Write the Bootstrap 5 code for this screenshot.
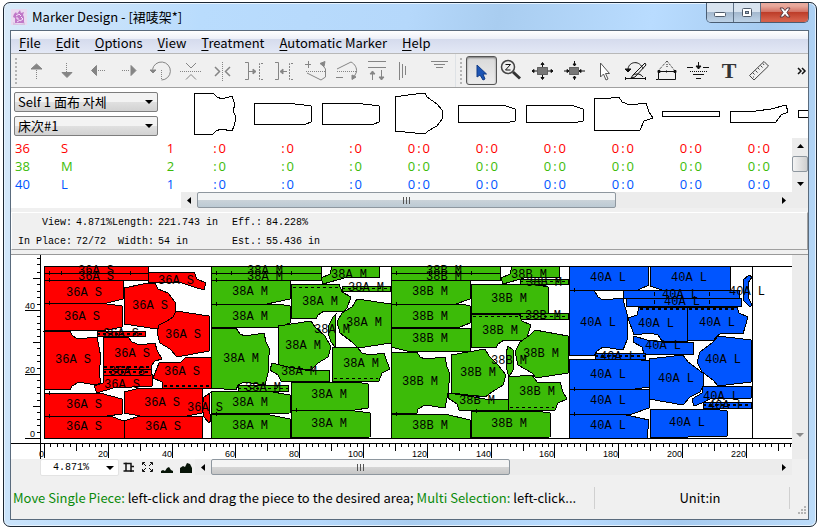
<!DOCTYPE html>
<html lang="en">
<head>
<meta charset="utf-8">
<meta name="viewport" content="width=device-width, initial-scale=1">
<title>Marker Design</title>
<link href="https://cdn.jsdelivr.net/npm/bootstrap@5.3.0/dist/css/bootstrap.min.css" rel="stylesheet">
<style>
  :root { --face: #f0f0f0; --line: #a0a0a0; --red: #f00; --green: #3cbb08; --blue: #0055ff; --ui: "Noto Sans CJK SC", "Noto Sans CJK KR", sans-serif; }
  body { font-family: "Open Sans", "Noto Sans CJK SC", "Noto Sans CJK KR", sans-serif; font-size: 12px; line-height: 16px; color: #000; background: #fff; }
  .frame { margin: 2px 1px 4px 3px; padding: 0 7px 6px 6px; border: 1px solid #1c2733; border-radius: 7px;
    background: linear-gradient(100deg, #d9eaf9 0, #b9dcfd 22%, #b5d8fb 45%, #a9cdf0 55%, #b9dcff 72%, #a6cbf0 85%, #bcdcfa 100%); box-shadow: inset 0 0 0 1px #e6f3ff; }
  .titlebar { height: 27px; font: 13px/20px var(--ui); }
  .titlebar svg { margin: 1px 5px 0 1px; }
  .caption-btns { height: 20px; border: 1px solid #4a5d73; border-top: 0; border-radius: 0 0 5px 5px; overflow: hidden; }
  .caption-btns svg { margin: 0; }
  .caption-btns button { width: 27px; border: 0; border-right: 1px solid #5d7086; background: linear-gradient(#d8e3ef 0 45%, #a2b6cc 45%, #bed3e8); display: flex; align-items: center; justify-content: center; }
  .caption-btns .close-btn { width: 47px; border-right: 0; background: linear-gradient(#e8a99c 0 15%, #d37567 45%, #bb3a26 46%, #d4604a 90%); }
  .client { border: 1px solid #5a6b7d; background: var(--face); }
  .menubar { height: 23px; padding: 2px 0 0 8px; background: linear-gradient(#fff 0, #edf0f8 35%, #d5dbed 36%, #e3e8f5 100%); font: 13px/20px var(--ui); border-bottom: 1px solid #b8b8b8; }
  .menubar a { color: #000; text-decoration: none; margin-right: 15px; }
  .menubar u { text-underline-offset: 2px; }
  .toolbar { height: 34px; border-bottom: 1px solid var(--line); }
  .toolbar button { width: 31px; height: 32px; padding: 0; border: 0; background: none; flex: none; color: #111; display: block; }
  .toolbar .off button { color: #858585; }
  .toolbar .pressed { height: 29px; margin-top: 2px; border: 1px solid #555; border-radius: 3px; background: linear-gradient(#d9d9d9, #ececec); box-shadow: inset 0 1px 2px #777; overflow: hidden; }
  .toolbar .pressed svg { margin: -2px 0 0 -1px; }
  .grip { width: 2px; height: 26px; margin: 4px 4px; background: repeating-linear-gradient(#b4b4b4 0 2px, transparent 2px 4px); flex: none; }
  svg { display: block; flex: none; }
  .ico { fill: none; stroke: currentColor; stroke-width: 1; }
  .toolbar .ico { margin-top: 1px; }
  .dot { stroke-dasharray: 1 1; }
  .solid { fill: currentColor; }
  .sheet { background: #fff; }
  .side { width: 170px; flex: none; }
  .side.picks { padding: 4px 0 0 3px; gap: 4px; }
  .combo { display: block; width: 144px; height: 20px; padding: 0 3px; font: 13px/18px var(--ui); color: #000; border: 1px solid #7d7d7d; border-radius: 2px; appearance: none;
    background: url("data:image/svg+xml,%3Csvg xmlns='http://www.w3.org/2000/svg' width='8' height='4'%3E%3Cpath d='M0 0h8L4 4z'/%3E%3C/svg%3E") no-repeat right 4px center, linear-gradient(#f3f3f3 0 50%, #e0e0e0 50%, #d2d2d2); }
  .combo.plain { width: 79px; height: 17px; border-color: #e3e3e3; padding-left: 12px; font: 10px/15px "Liberation Mono", monospace; background-color: #fff; background-image: url("data:image/svg+xml,%3Csvg xmlns='http://www.w3.org/2000/svg' width='8' height='4'%3E%3Cpath d='M0 0h8L4 4z'/%3E%3C/svg%3E"); }
  .sizes { table-layout: fixed; width: 100%; font-size: 13px; line-height: 16px; }
  .sizes td { padding: 2px 0 0; white-space: nowrap; overflow: hidden; }
  .sizes td.qty { padding-right: 23px; }
  .qty span { display: flex; justify-content: flex-end; gap: 2px; }
  .sbar { background: #ececec; display: flex; }
  .sbar.h { height: 16px; }
  .sbar.v { width: 16px; flex-direction: column; flex: none; }
  .sbar button { border: 0; padding: 0; background: none; width: 16px; height: 16px; display: flex; align-items: center; justify-content: center; flex: none; color: #444; }
  .thumb { border: 1px solid #8e979f; border-radius: 2px; background: linear-gradient(#f2f4f5 0 48%, #cbd3d9 49%, #bccad4); display: flex; align-items: center; justify-content: center; }
  .thumb.gray { background: linear-gradient(#f4f4f4 0 48%, #d6d6d6 49%, #c6c6c6); }
  .thumb.side-lit { background: linear-gradient(90deg, #f4f4f4, #cfcfcf); height: 16px; margin-top: 2px; }
  .readout { height: 38px; margin-top: 4px; border: 1px solid #fff; border-width: 1px 0 0 1px; border-right: 1px solid var(--line); border-bottom: 1px solid var(--line);
    font: 10px/18px "Liberation Mono", monospace; }
  .readout dl { display: grid; grid-template-columns: 60px 40px 42px 70px 38px auto; justify-content: start; margin: 0; }
  .readout dt { font-weight: 400; text-align: right; white-space: nowrap; padding-top: 1px; }
  .readout dd { margin: 0; padding: 1px 0 0 4px; white-space: nowrap; }
  .desk { margin-top: 4px; border-top: 1px solid #999; }
  .canvas-svg { width: 100%; height: 204px; flex: 1 1 0; min-width: 0; overflow: hidden; }
  .strip-svg { flex: 1 1 0; min-width: 0; height: 50px; }
  .canvas-svg .tag { font: 12px "Liberation Mono", monospace; text-anchor: middle; }
  .canvas-svg .num { font: 9px "Liberation Sans", sans-serif; text-anchor: end; }
  .canvas-svg path, .canvas-svg polygon { stroke: #000; shape-rendering: crispEdges; }
  .viewbar { height: 17px; }
  .viewbar .zoomer { margin-left: 29px; }
  .viewbar .mini { width: 19px; height: 17px; border: 0; padding: 0; background: none; }
  .status { height: 43px; font: 13px/20px var(--ui); padding: 0 1px 0 2px; }
  .status .cue { color: #0a8a0a; }
  .status .unit { width: 196px; border: 1px solid #d0d0d0; border-width: 0 1px; height: 22px; line-height: 22px; }
</style>
</head>
<body>
<div class="frame">
  <header class="titlebar d-flex align-items-start">
    <svg class="align-self-center" width="16" height="16" viewBox="0 0 16 16"><rect width="16" height="16" fill="#ead9f0"/><path d="M3 5l2-2 1 2 3-4 1 3 3-1-1 3 1 2v6H4V9L2 8z" fill="#c078c8"/><path d="M5 7l3-2 2 2M5 9h2v2M10 8l2 2-3 2M6 13l3-2" stroke="#f6e4fa" fill="none"/><path d="M2 13c4 3 8 3 12 0v3H2z" fill="#d9c3e2"/></svg>
    <span class="flex-grow-1 align-self-center">Marker Design - [裙唛架*]</span>
    <div class="caption-btns d-flex">
      <button type="button" aria-label="Minimize"><svg width="12" height="12"><rect x=".5" y="5.500" width="11" height="4" rx="1" fill="#fff" stroke="#4f5b6b"/></svg></button>
      <button type="button" aria-label="Maximize"><svg width="12" height="12"><rect x="1.500" y="1.500" width="9" height="8" rx="1" fill="#fff" stroke="#4f5b6b"/><rect x="4.500" y="4.500" width="3" height="2" fill="#9fb2c8" stroke="#4f5b6b"/></svg></button>
      <button type="button" class="close-btn" aria-label="Close"><svg width="12" height="11"><path d="M1 1h3l2 2.500L8 1h3L8 5.500 11 10H8L6 7.500 4 10H1l3-4.500z" fill="#fff" stroke="#5a3a42"/></svg></button>
    </div>
  </header>
  <main class="client">
    <nav class="menubar d-flex align-items-center">
      <a href="#"><u>F</u>ile</a><a href="#"><u>E</u>dit</a><a href="#"><u>O</u>ptions</a><a href="#"><u>V</u>iew</a><a href="#"><u>T</u>reatment</a><a href="#"><u>A</u>utomatic Marker</a><a href="#"><u>H</u>elp</a>
    </nav>
    <div class="toolbar d-flex">
      <div class="d-flex off border-end">
        <div class="grip"></div>
        <button type="button" aria-label="Up"><svg class="ico" width="31" height="32"><path class="solid" d="M10 14l5.500-5 5.500 5z"/><path class="dot" d="M15.500 15v9"/></svg></button>
        <button type="button" aria-label="Down"><svg class="ico" width="31" height="32"><path class="solid" d="M10 17.500h10l-5 5z"/><path class="dot" d="M14.500 8v9"/></svg></button>
        <button type="button" aria-label="Left"><svg class="ico" width="31" height="32"><path class="solid" d="M8.500 15.500l5-5v10z"/><path class="dot" d="M15 15.500h8"/></svg></button>
        <button type="button" aria-label="Right"><svg class="ico" width="31" height="32"><path class="solid" d="M22 15.500l-5-5v10z"/><path class="dot" d="M8 15.500h8"/></svg></button>
        <button type="button" aria-label="Rotate"><svg class="ico" width="31" height="32"><path d="M7.500 14.500A9 9 0 1 1 16.500 25"/><path class="solid" d="M5 15h6l-3 3z"/><path class="dot" d="M16.500 15v10"/></svg></button>
        <button type="button" aria-label="Flip vertical"><svg class="ico" width="31" height="32"><path class="dot" d="M4 16.500h22"/><path d="M10 8l5 5 5-5M10 24.500l5-5 5 5"/></svg></button>
        <button type="button" aria-label="Flip horizontal"><svg class="ico" width="31" height="32"><path class="dot" d="M15.500 7v19"/><path d="M8 12l4.500 4.500L8 21M23 12l-4.500 4.500L23 21" stroke-width="1.500"/></svg></button>
        <button type="button" aria-label="Match right"><svg class="ico" width="31" height="32"><path d="M7 7.500h3.500v17H7M11 16.500h6"/><path class="solid" d="M15 14l3 2.500-3 2.500z"/><path stroke-dasharray="2 1" d="M25 8.500h-3.500v16H25"/></svg></button>
        <button type="button" aria-label="Match left"><svg class="ico" width="31" height="32"><path d="M6 7.500h3.500v17H6M12 16.500h6"/><path class="solid" d="M14 14l-3 2.500 3 2.500z"/><path stroke-dasharray="2 1" d="M24 8.500h-3.500v16H24"/></svg></button>
        <button type="button" aria-label="Tilt up"><svg class="ico" width="31" height="32"><path d="M5 9.500h6M8.500 6v7M7 18l14 7 4.500-3V14l-3-4"/><path class="dot" d="M6 16.500h19"/><path class="solid" d="M20 8.500l5-2-1 5z"/></svg></button>
        <button type="button" aria-label="Tilt down"><svg class="ico" width="31" height="32"><path d="M6 14l14-7c4 2 6 6 5.500 10l-2 4M5 22.500h7"/><path class="dot" d="M6 16.500h19"/><path class="solid" d="M21 20l4 2-4 2.500z"/></svg></button>
        <button type="button" aria-label="Spread"><svg class="ico" width="31" height="32"><path d="M6 6.500h18M6 12.500h18M10.500 25v-7M19.500 15v7"/><path class="solid" d="M8 19l2.500-3 2.500 3zM17 22l2.500 3 2.500-3z"/></svg></button>
        <button type="button" aria-label="Align"><svg class="ico" width="31" height="32"><path d="M6.500 7v18M9.500 9v14M12.500 11v9"/></svg></button>
        <button type="button" aria-label="Filter"><svg class="ico" width="31" height="32"><path d="M7 6.500h17M10 9.500h11M12 12.500h7"/></svg></button>
      </div>
      <div class="d-flex flex-grow-1">
        <div class="grip"></div>
        <button type="button" class="pressed" aria-label="Select"><svg class="ico" width="31" height="32"><path d="M11 10v12l3-2 3 5 2-1-2-5h3.500z" fill="#1d55b5" stroke="#123c86"/></svg></button>
        <button type="button" aria-label="Zoom"><svg class="ico" width="31" height="32"><circle cx="11" cy="12" r="6.500" stroke="#444" stroke-width="1.500"/><path d="M8.500 9.500h5l-5 5.500h5"/><path d="M16 17l7 6.500" stroke-width="3" stroke="#333"/></svg></button>
        <button type="button" aria-label="Expand"><svg class="ico" width="31" height="32"><rect x="9.500" y="12.500" width="10" height="7" fill="#777" stroke-dasharray="1 1"/><path d="M14.500 8v4M14.500 20v4M4 16h5M20 16h5"/><path class="solid" d="M13 9.500l1.500-2 1.500 2zM13 22.500l1.500 2 1.500-2zM6 14.500L4 16l2 1.500zM23 14.500l2 1.500-2 1.500z"/></svg></button>
        <button type="button" aria-label="Shrink"><svg class="ico" width="31" height="32"><rect x="10.500" y="12.500" width="9" height="7" fill="#777" stroke-dasharray="1 1"/><path d="M15.500 6v5M15.500 21v4M5 16h5M20 16h6"/><path class="solid" d="M14 9h3l-1.500 2zM14 23h3l-1.500-2zM8 14.500v3l2-1.500zM22 14.500v3L20 16z"/></svg></button>
        <button type="button" aria-label="Pointer"><svg class="ico" width="31" height="32"><path d="M10.500 8v14l3-3 2.500 6 2-1-2.500-5.500h4z" fill="#fff" stroke="#555"/></svg></button>
        <button type="button" aria-label="Edit angle"><svg class="ico" width="31" height="32"><path d="M7 14c1-8 12-9 15 0M4 23.500h21M4.500 22v3M24.500 22v3"/><path class="solid" d="M4 14h6l-3 3z"/><path d="M24 8L12 20l-2 3 4-1L25 10zM12 20c4-2 8-1 10 2"/></svg></button>
        <button type="button" aria-label="Measure area"><svg class="ico" width="31" height="32"><path class="dot" d="M15 6L6 16M15 6l8 10M15 9v4"/><path d="M6.500 16.500h17v8h-17zM4 24.500h2"/><path class="solid" d="M6 15.500h2v2H6zM22 15.500h2v2h-2zM14 16h1v1h-1z"/></svg></button>
        <button type="button" aria-label="Drop"><svg class="ico" width="31" height="32"><path d="M4 12.500h6M20 12.500h6M15.500 7v7M10 19.500h11M13 23.500h5"/><path class="dot" d="M7 16.500h17"/><path class="solid" d="M13 11h5l-2.500 3z"/></svg></button>
        <button type="button" aria-label="Text"><svg class="ico" width="31" height="32"><text x="15" y="23" text-anchor="middle" font-family="Liberation Serif, serif" font-size="22" font-weight="700" fill="#333" stroke="none">T</text></svg></button>
        <button type="button" aria-label="Ruler"><svg class="ico" width="31" height="32"><path d="M4.500 20.500L19 6.500l4.500 4.500L9 25zM8 18l1.500 1.500M10.500 15.500l2 2M13 13l1.500 1.500M15.500 10.500l2 2M18 8.500l1 1.500M8 22h1" stroke="#444"/></svg></button>
        <button type="button" class="ms-auto" aria-label="More"><svg class="ico" width="31" height="32"><path d="M21 13l3 3-3 3M25 13l3 3-3 3" stroke-width="1.500"/></svg></button>
      </div>
    </div>

    <section class="sheet">
      <div class="d-flex overflow-hidden">
        <div class="side picks d-flex flex-column">
          <select class="combo" aria-label="Fabric"><option>Self 1 面布 자체</option></select>
          <select class="combo" aria-label="Bed"><option>床次#1</option></select>
        </div>
        <svg class="strip-svg" id="strip"></svg>
      </div>
      <div class="d-flex">
        <div class="flex-grow-1 overflow-hidden">
          <table class="sizes"><colgroup id="cols"></colgroup><tbody id="sizes"></tbody></table>
        </div>
        <div class="sbar v">
          <button type="button" aria-label="Scroll up"><svg width="7" height="4"><path d="M0 4h7L3.500 0z"/></svg></button>
          <div class="thumb side-lit"></div>
          <button type="button" class="mt-auto" aria-label="Scroll down"><svg width="7" height="4"><path d="M0 0h7L3.500 4z"/></svg></button>
        </div>
      </div>
      <div class="d-flex">
        <div class="side"></div>
        <div class="sbar h flex-grow-1">
          <button type="button" aria-label="Scroll left"><svg width="4" height="7"><path d="M4 0v7L0 3.500z"/></svg></button>
          <div class="thumb" style="width:68.500%"><svg width="9" height="7"><path d="M1.500 0v7M4.500 0v7M7.500 0v7" stroke="#555"/></svg></div>
          <button type="button" class="ms-auto" aria-label="Scroll right"><svg width="4" height="7"><path d="M0 0v7l4-3.500z"/></svg></button>
        </div>
        <div class="sbar v"></div>
      </div>
    </section>

    <section class="readout">
      <dl>
        <dt>View:</dt><dd>4.871%</dd><dt>Length:</dt><dd>221.743 in</dd><dt>Eff.:</dt><dd>84.228%</dd>
        <dt>In Place:</dt><dd>72/72</dd><dt>Width:</dt><dd>54 in</dd><dt>Est.:</dt><dd>55.436 in</dd>
      </dl>
    </section>

    <section class="desk">
      <div class="d-flex sheet">
        <svg class="canvas-svg" role="img" aria-label="Marker layout"><g transform="translate(33,11)" id="marker"></g></svg>
        <div class="sbar v"><button type="button" class="mt-auto mb-3" aria-label="Scroll down"><svg width="8" height="4" fill="#8a8a8a"><path d="M0 0h8L4 4z"/></svg></button></div>
      </div>
      <div class="viewbar d-flex">
        <div class="zoomer"><select class="combo plain" aria-label="Zoom"><option>4.871%</option></select></div>
        <button type="button" class="mini" aria-label="Fit"><svg width="19" height="17" fill="none" stroke="#111" stroke-width="1.500"><path d="M7 3.500v8.500h8M4.500 4.500h7.500v8.500M4.500 12h3M12 7.500h3"/></svg></button>
        <button type="button" class="mini" aria-label="Full"><svg width="19" height="17" fill="none" stroke="#111"><path d="M4.500 6V3.500H7M12 3.500h2.500V6M4.500 10v2.500H7M12 12.500h2.500V10M5 4l3 3M14 4l-3 3M5 12l3-3M14 12l-3-3"/></svg></button>
        <button type="button" class="mini" aria-label="Small hills"><svg width="19" height="17"><path d="M4 14v-2l2-1 2 1 2-3 2-1 2 3 2 1v2z" fill="#081508"/></svg></button>
        <button type="button" class="mini" aria-label="Large hills"><svg width="19" height="17"><path d="M4 14V9l3-2 2 1 2-4 3 1 2 4v5z" fill="#081508"/></svg></button>
        <div class="sbar h flex-grow-1">
          <button type="button" aria-label="Scroll left"><svg width="4" height="7"><path d="M4 0v7L0 3.500z"/></svg></button>
          <div class="thumb gray w-50"><svg width="9" height="7"><path d="M1.500 0v7M4.500 0v7M7.500 0v7" stroke="#555"/></svg></div>
          <button type="button" class="ms-auto" aria-label="Scroll right"><svg width="4" height="7"><path d="M0 0v7l4-3.500z"/></svg></button>
        </div>
        <div class="sbar v bg-transparent"></div>
      </div>
    </section>

    <footer class="status d-flex align-items-center">
      <div class="flex-grow-1 text-nowrap overflow-hidden"><span class="cue">Move Single Piece:</span> left-click and drag the piece to the desired area; <span class="cue">Multi Selection:</span> left-click...</div>
      <div class="unit text-center ps-3">Unit:in</div>
      <svg class="align-self-end mb-1 ms-2" width="9" height="9" fill="#b4b4b4"><path d="M6 0h2v2H6zM3 3h2v2H3zM6 3h2v2H6zM0 6h2v2H0zM3 6h2v2H3zM6 6h2v2H6z"/></svg>
    </footer>
  </main>
</div>

<script src="https://cdn.jsdelivr.net/npm/bootstrap@5.3.0/dist/js/bootstrap.bundle.min.js"></script>
<script>
  // Thumbnails of the pattern pieces, one per 68px column
  const thumbs = [
    "13,5 32,5 36,9 41,11 51,8 54,17 52,22 55,30 53,38 51,43 40,41 35,43 32,46 13,46",
    "73,15 105,15 123,17 130,18 130,34 125,36 73,36",
    "141,15 173,15 191,17 198,18 198,34 193,36 141,36",
    "214,9 227,7 244,5 246,9 256,16 261,22 261,31 256,38 247,43 244,46 214,43",
    "277,17 322,17 334,21 334,33 329,34 277,34",
    "345,17 390,17 402,21 402,33 397,34 345,34",
    "413,11 430,10 438,9 441,14 449,17 465,15 468,24 472,30 463,33 459,42 413,42",
    "481,23 538,23 538,28 481,28",
    "549,24 575,23 590,21 605,17 607,24 600,27 595,34 549,34",
    "617,22 680,22 680,29 617,29"
  ];
  document.getElementById("strip").innerHTML = thumbs.map(p =>
    `<polygon points="${p}" fill="none" stroke="#000" shape-rendering="crispEdges"/>`).join("");

  const widths = [50, 99, 21, ...Array(9).fill(68)];
  document.getElementById("cols").innerHTML = widths.map(w => `<col width="${w}">`).join("") + "<col>";
  const rows = [["36", "S", 1, "var(--red)"], ["38", "M", 2, "var(--green)"], ["40", "L", 1, "var(--blue)"]];
  document.getElementById("sizes").innerHTML = rows.map(([code, size, n, colour]) =>
    `<tr style="color:${colour}"><td class="ps-1">${code}</td><td>${size}</td><td class="text-center">${n}</td>` +
    widths.slice(3).map((_, i) => `<td class="qty"><span>${i > 2 ? "<b class='fw-normal'>0</b>" : ""}<b class="fw-normal">:</b><b class="fw-normal">0</b></span></td>`).join("") + "<td></td></tr>").join("");

  // Each piece: outline, centre of its label, and an optional dashed seam
  const groups = [
    { fill: "#ff0000", name: "36A S", seamWidth: 2, pieces: [
      ["0,0 104,0 104,7 0,7", 52, 4], ["0,7 104,7 104,14 0,14", 52, 10],
      ["0,14 79,15 79,33 63,37 0,37", 40, 26], ["0,37 63,38 78,40 78,61 63,64 0,65", 38, 50],
      ["0,65 26,65 28,69 33,73 53,71 55,81 57,92 55,106 57,117 51,119 35,116 28,120 26,124 0,123", 29, 93],
      ["0,127 56,127 78,133 78,148 63,150 0,150", 40, 138], ["0,150 66,150 80,155 80,172 0,172", 40, 160],
      ["80,126 96,122 158,122 158,147 143,150 96,150 80,147", 118, 136], ["80,155 96,150 158,150 158,172 80,172", 119, 160],
      ["104,6 150,6 153,13 162,17 160,24 150,21 138,17 104,16", 132, 14],
      ["80,22 99,18 111,17 114,23 124,27 131,36 132,46 128,53 119,58 113,63 80,58", 106, 39],
      ["132,45 165,50 165,85 133,91 126,83 116,77 113,67 115,59 123,55 129,51", 139, 68],
      ["53,65 101,65 101,70 53,70", 77, 67, "M53 68h48"],
      ["59,72 84,71 88,76 96,79 111,77 113,84 118,93 111,95 108,99 107,103 59,103", 88, 87, "M60 101h46"],
      ["59,103 107,103 107,109 59,109", 83, 105, "M59 106h48"],
      ["60,110 108,109 108,120 69,122 53,127 50,120 59,117", 78, 118],
      ["115,97 137,96 142,91 167,91 167,122 119,122 118,116 109,112", 138, 105, "M120 120h46"],
      ["166,127 160,131 158,141 160,151 165,157 167,154 165,141", 161, 141]] },
    { fill: "#3cbb08", name: "38A M", seamWidth: 1, pieces: [
      ["167,0 277,0 277,7 167,7", 221, 4], ["167,7 277,7 277,14 167,14", 221, 10],
      ["167,14 246,14 246,33 223,38 167,38", 206, 25], ["167,38 234,38 246,40 246,57 236,61 167,61", 206, 50],
      ["167,62 192,62 196,68 201,70 220,67 222,76 226,84 224,94 224,107 221,119 200,116 194,119 192,124 167,122", 197, 92],
      ["167,125 223,125 246,129 246,147 167,148", 206, 136], ["167,148 221,148 246,153 246,172 167,172", 206, 159],
      ["247,116 311,116 324,118 324,142 311,144 247,144", 285, 128], ["247,144 311,145 326,147 326,171 247,172", 285, 157],
      ["288,0 335,0 335,11 304,11 293,14 279,18 277,12 286,8", 305, 8],
      ["247,18 295,18 298,26 307,31 303,42 300,46 280,45 274,49 272,53 247,52", 276, 35, "M249 21.500h46"],
      ["298,20 346,20 346,25 298,25", 322, 21, "M298 22.500h48"],
      ["313,33 347,38 347,77 314,82 308,76 296,67 293,56 298,47 308,41", 320, 56],
      ["292,48 289,51 285,59 284,67 287,76 291,81 292,74 291,64", 288, 63],
      ["234,60 267,55 271,61 281,70 287,81 284,91 274,97 267,104 234,100", 259, 79],
      ["288,82 313,81 318,87 326,89 340,87 343,96 346,103 338,107 335,115 288,115", 317, 97, "M290 112.500h44"],
      ["228,97 244,101 261,104 285,104 285,115 237,115 234,109 226,104", 255, 105],
      ["194,119 244,119 244,125 194,125", 219, 121, "M194 122.500h50"]] },
    { fill: "#3cbb08", name: "38B M", seamWidth: 1, pieces: [
      ["347,0 456,0 456,7 347,7", 400, 4], ["347,7 456,7 456,14 347,14", 400, 10],
      ["347,14 426,14 426,33 412,38 347,38", 386, 25], ["347,38 418,38 426,40 426,57 416,61 347,61", 386, 50],
      ["347,62 426,62 426,85 363,85 347,81", 386, 72],
      ["347,86 373,86 376,91 381,93 401,91 403,101 406,108 404,127 401,142 381,139 374,143 373,147 347,147", 376, 115],
      ["347,148 401,148 426,154 426,172 347,172", 386, 159], ["427,145 491,145 506,147 506,171 427,172", 465, 157],
      ["427,18 494,19 504,21 504,47 427,48", 465, 32],
      ["468,0 515,0 515,11 484,11 473,14 459,18 457,12 466,8", 485, 8],
      ["476,13 524,13 524,18 476,18", 500, 16, "M476 15.500h48"], ["476,47 524,47 524,53 476,53", 499, 49, "M476 50.500h48"],
      ["427,48 475,48 478,55 487,59 483,71 481,75 460,74 454,78 452,82 427,81", 456, 64, "M429 50.500h46"],
      ["491,64 524,70 524,107 492,112 488,107 474,99 471,86 476,76 486,69", 497, 87],
      ["464,80 462,87 462,101 465,111 469,104 470,94 469,84", 465, 94],
      ["407,89 441,83 445,90 454,99 462,109 459,119 448,126 441,131 407,127", 434, 106],
      ["464,111 488,109 493,116 498,117 516,116 519,126 523,133 514,137 511,144 464,144", 493, 125, "M466 141.500h44"],
      ["404,127 424,130 441,133 464,133 464,144 415,144 413,138 404,132", 433, 134]] },
    { fill: "#0055ff", name: "40A L", seamWidth: 2, pieces: [
      ["525,0 604,0 605,19 594,24 525,24", 564, 11], ["606,0 686,0 686,24 618,24 606,20", 645, 11],
      ["525,24 550,24 554,31 559,34 579,32 581,41 584,51 583,64 583,74 579,84 559,81 553,85 550,90 525,89", 554, 56],
      ["579,24 695,24 695,32 579,32", 636, 28], ["582,32 697,32 697,40 582,40", 638, 35],
      ["595,41 643,41 643,75 618,75 614,69 606,67 590,69 584,52 593,49", 612, 57, "M596 43h46"],
      ["643,41 693,41 695,47 704,51 699,68 678,67 673,70 669,75 643,74", 673, 56, "M645 43h48"],
      ["590,70 603,74 618,76 649,76 649,88 600,88 598,81 589,76", 619, 79],
      ["551,87 601,87 601,93 551,93", 574, 90, "M551 90h50"],
      ["525,93 589,93 605,95 605,121 591,123 525,123", 564, 108], ["525,123 605,124 605,142 588,148 525,148", 564, 134],
      ["525,148 578,148 605,154 603,172 525,172", 564, 159], ["606,143 668,143 683,145 683,170 606,172", 643, 156],
      ["605,93 639,89 644,96 659,107 660,119 656,126 646,131 639,139 605,133", 632, 112],
      ["674,70 707,74 707,116 674,120 669,114 658,106 653,96 656,86 669,76", 679, 93],
      ["659,120 707,120 707,132 666,133 658,137 650,140 648,133 658,127", 677, 130],
      ["659,136 707,136 707,142 659,142", 682, 139, "M659 139h48"],
      ["705,9 699,14 699,34 706,41 708,39 704,31 704,17 708,11", 703, 25]] }
  ];
  let shapes = "", tags = "";
  for (const g of groups) for (const [pts, x, y, seam] of g.pieces) {
    shapes += `<polygon points="${pts}" fill="${g.fill}"/>`;
    if (seam) shapes += `<path d="${seam}" stroke-width="${g.seamWidth}" stroke-dasharray="3 3"/>`;
    tags += `<text class="tag" x="${x}" y="${y + 4}">${g.name}</text>`;
  }
  // Grain notches on the piece edges
  const notches = [[5,7],[5,14],[5,37],[5,127],[5,150],[17,7],[86,7],[172,7],[172,14],[172,38],[172,148],[187,7],[247,7],[352,7],[352,38],[352,148],[385,7],[427,7],[530,24],[530,123],[530,148],[252,144],[432,145],[610,28],[665,28],[610,36],[665,36]]
    .map(([x, y]) => `M${x}.500 ${y - 2}v4`).join("");
  // Rulers: a tick every 2 inches, longer at 10, numbered at 20
  const step = 3.19;
  let ticks = "", nums = "";
  for (let v = 0; v <= 234; v += 2) {
    const x = Math.round(v * step);
    ticks += `M${x}.500 177v${v % 20 === 0 ? 15 : v % 10 === 0 ? 8 : 4}`;
    if (v % 20 === 0) nums += `<text class="num" x="${x}" y="191">${v}</text>`;
  }
  for (let v = 0; v <= 56; v += 2) {
    const y = 172 - Math.round(v * 3.2);
    ticks += `M-4 ${y}.500h-${v % 20 === 0 ? 15 : v % 10 === 0 ? 7 : 3}`;
    if (v % 20 === 0) nums += `<text class="num" x="-9" y="${y - 1}">${v}</text>`;
  }
  document.getElementById("marker").innerHTML =
    `<path d="M0 .500H748M0 172.500H748M708.500 0V172M347.500 0V172M.500 0V172" fill="none"/>` + shapes +
    `<path d="${notches}M-33 177.500H748M-3.500 -11V193${ticks}" fill="none"/>` + nums + tags;
</script>
</body>
</html>
